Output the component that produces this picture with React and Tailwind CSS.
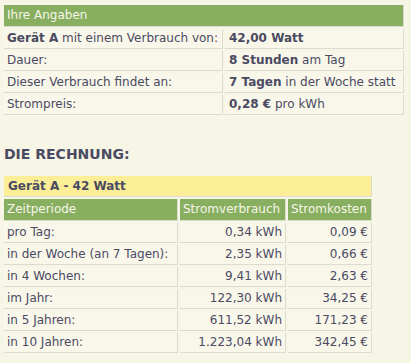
const angaben = [
  [<><b>Gerät A</b> mit einem Verbrauch von:</>, <b>42,00 Watt</b>],
  ['Dauer:', <><b>8 Stunden</b> am Tag</>],
  ['Dieser Verbrauch findet an:', <><b>7 Tagen</b> in der Woche statt</>],
  ['Strompreis:', <><b>0,28 €</b> pro kWh</>],
]

const rechnung = [
  ['pro Tag:', '0,34 kWh', '0,09 €'],
  ['in der Woche (an 7 Tagen):', '2,35 kWh', '0,66 €'],
  ['in 4 Wochen:', '9,41 kWh', '2,63 €'],
  ['im Jahr:', '122,30 kWh', '34,25 €'],
  ['in 5 Jahren:', '611,52 kWh', '171,23 €'],
  ['in 10 Jahren:', '1.223,04 kWh', '342,45 €'],
]

const cell = 'h-[20px] border-r border-b border-[#dcdbd0] bg-[#f9f7ea] p-0 leading-[19px] whitespace-nowrap'

export default function App() {
  return (
    <div className="min-h-[363px] w-[411px] bg-[#f7f5e6] px-[2px] pt-[3px] text-[12px] text-[#4a4a62]" style={{ fontFamily: '"DejaVu Sans", Verdana, sans-serif' }}>
      {/* Ihre Angaben */}
      <table className="table-fixed w-[404px] border-separate border-spacing-[2px]">
        <colgroup>
          <col className="w-[219px]" />
          <col />
        </colgroup>
        <tbody>
          <tr>
            <td colSpan={2} className="h-[22px] border-r border-b border-[#dcdbd0] bg-[#88ae5f] pl-[3px] leading-[21px] text-[#f6f6ea]">Ihre Angaben</td>
          </tr>
          {angaben.map(([l, r], i) => (
            <tr key={i}>
              <td className={`${cell} pl-[3px]`}>{l}</td>
              <td className={`${cell} pl-[4px]`}>{r}</td>
            </tr>
          ))}
        </tbody>
      </table>

      <h2 className="mt-[29px] ml-[2px] text-[14px] font-bold leading-[17px]">DIE RECHNUNG:</h2>

      {/* Rechnung */}
      <table className="mt-[11px] table-fixed w-[372px] border-separate border-spacing-[2px]">
        <colgroup>
          <col className="w-[174px]" />
          <col className="w-[106px]" />
          <col />
        </colgroup>
        <tbody>
          <tr>
            <td colSpan={3} className="h-[21px] border-r border-b border-[#dcdbd0] bg-[#fbee96] pl-[4px] font-bold leading-[20px]">Gerät A - 42 Watt</td>
          </tr>
          <tr className="text-[#f6f6ea]">
            <td className="h-[22px] border-r border-b border-[#dcdbd0] bg-[#88ae5f] pl-[3px] leading-[21px]">Zeitperiode</td>
            <td className="h-[22px] border-r border-b border-[#dcdbd0] bg-[#88ae5f] pl-[3px] leading-[21px]">Stromverbrauch</td>
            <td className="h-[22px] border-r border-b border-[#dcdbd0] bg-[#88ae5f] pl-[3px] leading-[21px]">Stromkosten</td>
          </tr>
          {rechnung.map(([a, b, c]) => (
            <tr key={a}>
              <td className={`${cell} pl-[3px]`}>{a}</td>
              <td className={`${cell} pr-[3px] text-right`}>{b}</td>
              <td className={`${cell} pr-[3px] text-right`}>{c}</td>
            </tr>
          ))}
        </tbody>
      </table>
    </div>
  )
}
